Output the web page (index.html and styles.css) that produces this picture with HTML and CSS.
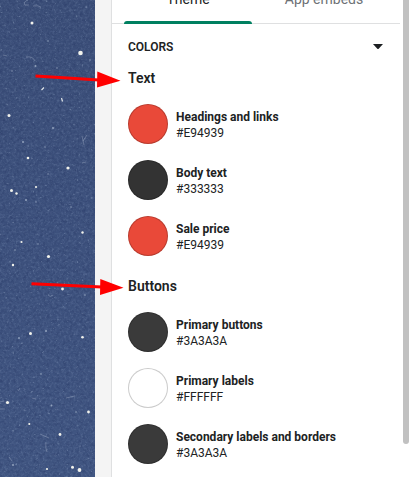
FILE: index.html
```
<!DOCTYPE html>
<html lang="en">
<head>
<meta charset="utf-8">
<title>Theme settings</title>
<link rel="stylesheet" href="styles.css">
</head>
<body>
<div class="editor">
  <div class="preview">
    <svg width="95" height="477" viewBox="0 0 95 477">
      <defs>
        <linearGradient id="sky" x1="0" y1="0" x2="0" y2="1"><stop offset="0" stop-color="#3b4e78"/><stop offset=".5" stop-color="#3d517d"/><stop offset="1" stop-color="#405581"/></linearGradient>
        <filter id="grain" x="0" y="0" width="100%" height="100%" color-interpolation-filters="sRGB"><feTurbulence type="fractalNoise" baseFrequency=".42" numOctaves="3" seed="7"/><feColorMatrix values="0 0 0 0 .68  0 0 0 0 .76  0 0 0 0 .88  1.8 0 0 0 -.82"/></filter>
        <filter id="dark" x="0" y="0" width="100%" height="100%" color-interpolation-filters="sRGB"><feTurbulence type="fractalNoise" baseFrequency=".3" numOctaves="3" seed="21"/><feColorMatrix values="0 0 0 0 .12  0 0 0 0 .18  0 0 0 0 .36  1.5 0 0 0 -.65"/></filter>
        <filter id="specks" x="0" y="0" width="100%" height="100%" color-interpolation-filters="sRGB"><feTurbulence type="fractalNoise" baseFrequency=".33" numOctaves="2" seed="4"/><feColorMatrix values="0 0 0 0 .75  0 0 0 0 .82  0 0 0 0 .9  0 6 0 0 -4.2"/></filter>
      </defs>
      <rect width="95" height="477" fill="url(#sky)"/>
      <rect width="95" height="477" filter="url(#dark)" opacity=".5"/>
      <rect width="95" height="477" filter="url(#grain)" opacity=".22"/>
      <rect width="95" height="477" filter="url(#specks)" opacity=".28"/>
      <g fill="none" stroke="#b6c4d8" stroke-width=".7" opacity=".5">
        <path d="M28 0q-5 2-3 5l4 0M33 6q5-1 8 1M26 57q7-1 9 4M3 55l4 1M83 141l4-6M82 136l2 9M82 163l4-1M48 295q2 3 5 0M40 434l9 4M46 442q-1 6 1 10M66 398l9-2M0 402l4-1M0 409l5 0M32 398l4 1M9 457l3 4M18 391l2-3"/>
      </g>
      <g fill="#aebdd2" opacity=".75">
        <circle cx="35.5" cy="66" r="1"/><circle cx="48" cy="41" r=".8"/><circle cx="57" cy="68" r=".7"/><circle cx="12" cy="71" r=".7"/><circle cx="90" cy="60" r=".8"/><circle cx="53" cy="128" r="1"/><circle cx="23" cy="142" r="1"/><circle cx="45" cy="147" r=".7"/><circle cx="48" cy="174" r=".7"/><circle cx="26" cy="200" r="1"/><circle cx="36" cy="202" r=".7"/><circle cx="71" cy="207" r=".7"/><circle cx="15" cy="250" r=".8"/><circle cx="38" cy="244" r=".7"/><circle cx="85" cy="295" r=".8"/><circle cx="46" cy="331" r="1"/><circle cx="19" cy="338" r=".9"/><circle cx="41" cy="374" r=".8"/><circle cx="51.5" cy="405.5" r="1"/><circle cx="76" cy="412" r=".8"/><circle cx="13" cy="465" r="1"/>
      </g>
      <g fill="#f2f3ec">
        <circle cx="32" cy="23" r="1.5"/><circle cx="80.5" cy="53" r="2.3"/><circle cx="9" cy="115.5" r="1.5"/><circle cx="28" cy="158" r="1.3"/><circle cx="68" cy="168" r="1.6"/><circle cx="36" cy="187" r="1.1"/><circle cx="11.5" cy="190.5" r="1.5"/><circle cx="16.5" cy="193.5" r="1.2"/><circle cx="82.5" cy="232.5" r="1.2"/><circle cx="21.5" cy="242" r="1.1"/><circle cx="48.5" cy="256.5" r="1.6"/><circle cx="13" cy="265" r="1.2"/><circle cx="62.5" cy="289" r="1.4"/><circle cx="30.5" cy="333.5" r="1.5"/><circle cx="82.5" cy="337.2" r="1.3"/><circle cx="7.5" cy="402.5" r="1.6"/><circle cx="88.5" cy="412" r="1.4"/><circle cx="29.3" cy="424" r="1.1"/><circle cx="60" cy="434.5" r="1.4"/><circle cx="47" cy="469" r="1.1"/><circle cx="72.5" cy="467.3" r="1.5"/><circle cx="79.5" cy="470" r="1.9"/>
      </g>
      <path d="M61.5 98l1 3.500M41.500 90l2.500-2.500" stroke="#dfe5e8" stroke-width="1.2"/>
    </svg>
  </div>
  <div class="gutter"></div>
  <div class="panel">
    <div class="content">
      <div class="tabs">
        <div class="tab tab-active">Theme</div>
        <div class="tab">App embeds</div>
      </div>
      <div class="section-head"><span>COLORS</span><svg width="10" height="5" viewBox="0 0 10 5"><path d="M0 0h10L5.700 4.700q-.7.5-1.400 0z" fill="#1c1f22"/></svg></div>
      <h2 class="group">Text</h2>
      <div class="row"><i class="swatch red"></i><div class="label"><b>Headings and links</b><p>#E94939</p></div></div>
      <div class="row"><i class="swatch body"></i><div class="label"><b>Body text</b><p>#333333</p></div></div>
      <div class="row"><i class="swatch red"></i><div class="label"><b>Sale price</b><p>#E94939</p></div></div>
      <h2 class="group">Buttons</h2>
      <div class="row"><i class="swatch dark"></i><div class="label"><b>Primary buttons</b><p>#3A3A3A</p></div></div>
      <div class="row"><i class="swatch white"></i><div class="label"><b>Primary labels</b><p>#FFFFFF</p></div></div>
      <div class="row"><i class="swatch dark"></i><div class="label"><b>Secondary labels and borders</b><p>#3A3A3A</p></div></div>
    </div>
    <div class="scroll"></div>
  </div>
  <svg class="arrows" width="130" height="477" viewBox="0 0 130 477">
    <path d="M35.500 76L99 80M31.500 283.800L102 287" stroke="#f00" stroke-width="3"/>
    <path d="M97.300 71.500L120.500 80.800 97 87.500zM100.300 279L123.500 287.700 100 295z" fill="#f00"/>
  </svg>
</div>
</body>
</html>
```
FILE: styles.css
```
* { box-sizing: border-box; }
body { margin: 0; background: #fff; color: #202223; font: 12px/16px Roboto, "Liberation Sans", sans-serif; overflow: hidden; }
.editor { position: relative; display: flex; width: 412px; height: 477px; overflow: hidden; }
.preview { width: 95px; flex: none; overflow: hidden; }
.preview svg { display: block; }
.gutter { width: 16px; flex: none; background: #f4f4f4; }
.panel { flex: 1; display: flex; border-left: 1px solid #dfe0e1; background: #fff; }
.content { width: 288px; flex: none; }
.tabs { display: flex; gap: 8px; height: 24px; padding-left: 12px; background: linear-gradient(#dfe0e1, #dfe0e1) bottom / 100% 1px no-repeat; }
.tab { display: flex; justify-content: center; width: 128px; height: 24px; flex: none; font-size: 14px; line-height: 20px; color: #6d7175; }
.tab { line-height: 0; margin-top: -1px; height: 25px; }
.tab-active { color: #202223; }
.tab-active { position: relative; }
.tab-active::after { content: ""; position: absolute; left: 0; right: 0; bottom: 0; height: 3px; background: #008060; border-radius: 3px 3px 0 0; }
.section-head { display: flex; justify-content: space-between; align-items: center; height: 16px; margin: 15px 17px 0 16px; font-weight: 600; }
.section-head svg { margin-top: -2px; }
.group { margin: 13px 0 16px 16px; font-size: 14px; line-height: 20px; font-weight: 600; }
.row { display: flex; align-items: center; gap: 8px; height: 40px; margin: 0 0 16px 16px; }
.swatch { width: 40px; height: 40px; flex: none; border-radius: 50%; border: 1px solid rgba(0, 0, 0, .2); }
.red { background: #e94939; }
.body { background: #333; }
.dark { background: #3a3a3a; }
.white { background: #fff; }
.label { padding-top: 2px; }
.row b { display: block; font-weight: 700; white-space: nowrap; }
.row p { margin: 0; }
.row + .group { margin-top: 20px; }
.scroll { width: 6px; height: 444px; margin-left: 3px; background: #c1c1c1; border-radius: 0 0 3px 3px; }
.arrows { position: absolute; left: 0; top: 0; }
```
